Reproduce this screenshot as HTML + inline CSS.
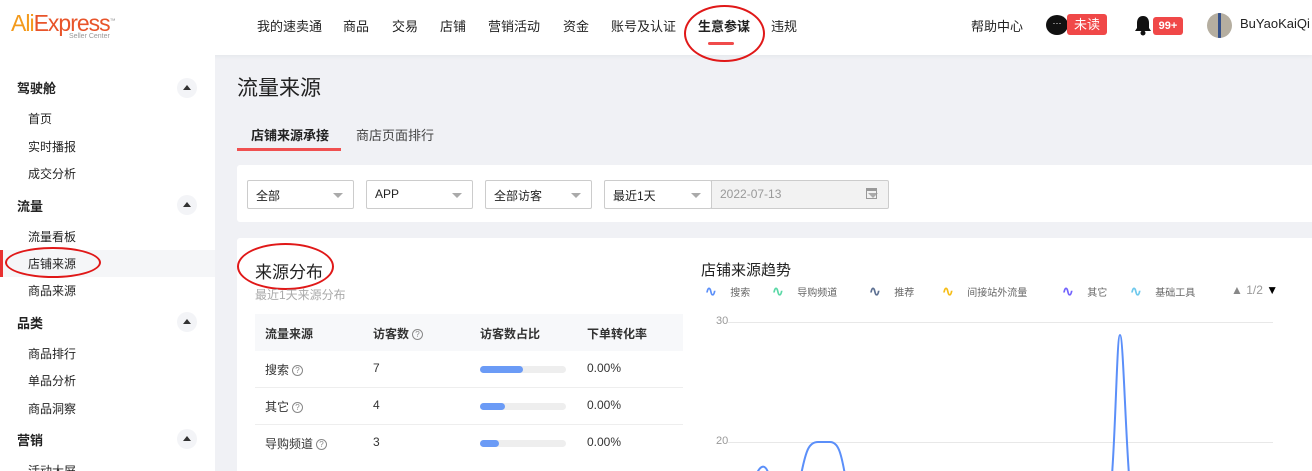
<!DOCTYPE html>
<html><head><meta charset="utf-8"><style>
*{margin:0;padding:0;box-sizing:border-box}
html,body{width:1312px;height:471px;overflow:hidden}
body{background:#f0f1f5;font-family:"Liberation Sans","Noto Sans CJK SC",sans-serif;color:#333;position:relative;font-size:13px}
.a{position:absolute;white-space:nowrap}
.hdr{position:absolute;left:0;top:0;width:1312px;height:55px;background:#fff;box-shadow:0 2px 4px rgba(0,0,0,.04)}
.nav{top:16px;font-size:13px;color:#222}
.side{position:absolute;left:0;top:55px;width:215px;height:416px;background:#fff}
.sg{font-size:13px;font-weight:bold;color:#222;left:17px}
.si{font-size:12px;color:#222;left:28px}
.car{position:absolute;left:177px;width:20px;height:20px;border-radius:50%;background:#f3f4f7}
.car:after{content:"";position:absolute;left:6px;top:7px;border:4px solid transparent;border-bottom:5px solid #333;border-top:0}
.card{position:absolute;background:#fff;border-radius:3px}
.sel{position:absolute;top:180px;height:29px;border:1px solid #ccc;border-radius:2px;font-size:12px;padding:6px 8px;color:#222;background:#fff}
.sel:after{content:"";position:absolute;right:10px;top:12px;border:5px solid transparent;border-top:5px solid #aaa}
.th{font-size:12px;font-weight:bold;color:#333;top:325px}
.td{font-size:12px;color:#333}
.q{display:inline-block;width:11px;height:11px;border:1px solid #888;border-radius:50%;font-size:8px;line-height:9px;text-align:center;color:#888;vertical-align:middle;margin-left:3px;font-weight:normal}
.bar{position:absolute;left:480px;width:86px;height:7px;border-radius:4px;background:#eee}
.bar i{display:block;height:7px;border-radius:4px;background:#6b9bf6}
.lg{font-size:10px;color:#666;top:283px}
.lg b{font-size:14px;font-weight:bold;margin-right:8px}
</style></head><body>
<div class="hdr"></div>
<div class="a" style="left:11px;top:10px;font-size:23px;letter-spacing:-1px;color:#e8542a"><span style="color:#f39a1c">Ali</span>Express<sup style="font-size:6px;color:#999">™</sup></div>
<div class="a" style="left:69px;top:33px;font-size:7px;color:#999">Seller Center</div>
<div class="a nav" style="left:257px">我的速卖通</div>
<div class="a nav" style="left:343px">商品</div>
<div class="a nav" style="left:392px">交易</div>
<div class="a nav" style="left:440px">店铺</div>
<div class="a nav" style="left:488px">营销活动</div>
<div class="a nav" style="left:563px">资金</div>
<div class="a nav" style="left:611px">账号及认证</div>
<div class="a nav" style="left:698px;font-weight:bold">生意参谋</div>
<div class="a" style="left:708px;top:42px;width:26px;height:3px;background:#f04b4b;border-radius:2px"></div>
<div class="a nav" style="left:771px">违规</div>
<div class="a" style="left:684px;top:5px;width:81px;height:57px;border:2px solid #e01818;border-radius:50%"></div>
<div class="a nav" style="left:971px">帮助中心</div>
<div class="a" style="left:1046px;top:15px;width:22px;height:20px;border-radius:50%;background:#111;color:#fff;font-size:9px;text-align:center;line-height:16px">···</div>
<div class="a" style="left:1067px;top:14px;width:40px;height:21px;background:#f04848;border-radius:3px;color:#fff;font-size:13px;text-align:center;line-height:21px">未读</div>
<svg class="a" style="left:1133px;top:14px" width="20" height="22" viewBox="0 0 20 22"><path d="M10 2c-4 0-6 3-6 7v5l-2 3h16l-2-3V9c0-4-2-7-6-7z" fill="#111"/><circle cx="10" cy="19" r="2.5" fill="#111"/></svg>
<div class="a" style="left:1153px;top:17px;width:30px;height:18px;background:#f04848;border-radius:3px;color:#fff;font-size:11px;font-weight:bold;text-align:center;line-height:18px">99+</div>
<div class="a" style="left:1207px;top:13px;width:25px;height:25px;border-radius:50%;background:#b5aea0;overflow:hidden"><div style="position:absolute;left:11px;top:0;width:3px;height:25px;background:#34508a"></div></div>
<div class="a nav" style="left:1240px">BuYaoKaiQi t</div>

<div class="side"></div>
<div class="a sg" style="top:78px">驾驶舱</div><div class="car" style="top:78px"></div>
<div class="a si" style="top:110px">首页</div>
<div class="a si" style="top:138px">实时播报</div>
<div class="a si" style="top:165px">成交分析</div>
<div class="a sg" style="top:196px">流量</div><div class="car" style="top:195px"></div>
<div class="a si" style="top:228px">流量看板</div>
<div class="a" style="left:0;top:250px;width:215px;height:27px;background:#f5f6f8"></div>
<div class="a" style="left:0;top:250px;width:3px;height:27px;background:#e83030"></div>
<div class="a si" style="top:255px">店铺来源</div>
<div class="a" style="left:5px;top:247px;width:96px;height:31px;border:2px solid #e01818;border-radius:50%"></div>
<div class="a si" style="top:282px">商品来源</div>
<div class="a sg" style="top:313px">品类</div><div class="car" style="top:312px"></div>
<div class="a si" style="top:345px">商品排行</div>
<div class="a si" style="top:372px">单品分析</div>
<div class="a si" style="top:400px">商品洞察</div>
<div class="a sg" style="top:430px">营销</div><div class="car" style="top:429px"></div>
<div class="a si" style="top:462px">活动大屏</div>

<div class="a" style="left:237px;top:72px;font-size:21px;color:#222">流量来源</div>
<div class="a" style="left:251px;top:125px;font-size:13px;font-weight:bold;color:#222">店铺来源承接</div>
<div class="a" style="left:356px;top:125px;font-size:13px;color:#444">商店页面排行</div>
<div class="a" style="left:237px;top:148px;width:104px;height:3px;background:#f05050"></div>

<div class="card" style="left:237px;top:165px;width:1080px;height:57px"></div>
<div class="sel" style="left:247px;width:107px">全部</div>
<div class="sel" style="left:366px;width:107px">APP</div>
<div class="sel" style="left:485px;width:107px">全部访客</div>
<div class="sel" style="left:604px;width:108px">最近1天</div>
<div class="sel" style="left:711px;width:178px;background:#f2f2f2;color:#999;border-radius:0 2px 2px 0">2022-07-13</div>
<div class="a" style="left:866px;top:188px;width:11px;height:11px;border:1.5px solid #999;border-top-width:3px"></div>

<div class="card" style="left:237px;top:238px;width:1080px;height:240px"></div>
<div class="a" style="left:255px;top:258px;font-size:17px;color:#222">来源分布</div>
<div class="a" style="left:237px;top:243px;width:97px;height:47px;border:2px solid #e01818;border-radius:50%"></div>
<div class="a" style="left:255px;top:286px;font-size:12px;color:#aaa">最近1天来源分布</div>
<div class="a" style="left:255px;top:314px;width:428px;height:37px;background:#f7f8fa"></div>
<div class="a th" style="left:265px">流量来源</div>
<div class="a th" style="left:373px">访客数<span class="q">?</span></div>
<div class="a th" style="left:480px">访客数占比</div>
<div class="a th" style="left:587px">下单转化率</div>
<div class="a" style="left:255px;top:387px;width:428px;height:1px;background:#eee"></div>
<div class="a" style="left:255px;top:424px;width:428px;height:1px;background:#eee"></div>
<div class="a td" style="left:265px;top:361px">搜索<span class="q">?</span></div><div class="a td" style="left:373px;top:361px">7</div><div class="bar" style="top:366px"><i style="width:43px"></i></div><div class="a td" style="left:587px;top:361px">0.00%</div>
<div class="a td" style="left:265px;top:398px">其它<span class="q">?</span></div><div class="a td" style="left:373px;top:398px">4</div><div class="bar" style="top:403px"><i style="width:25px"></i></div><div class="a td" style="left:587px;top:398px">0.00%</div>
<div class="a td" style="left:265px;top:435px">导购频道<span class="q">?</span></div><div class="a td" style="left:373px;top:435px">3</div><div class="bar" style="top:440px"><i style="width:19px"></i></div><div class="a td" style="left:587px;top:435px">0.00%</div>

<div class="a" style="left:701px;top:259px;font-size:15px;color:#222">店铺来源趋势</div>
<div class="a lg" style="left:705px"><b style="color:#5b8ff9">∿</b>&nbsp; 搜索</div>
<div class="a lg" style="left:772px"><b style="color:#5ad8a6">∿</b>&nbsp; 导购频道</div>
<div class="a lg" style="left:869px"><b style="color:#5d7092">∿</b>&nbsp; 推荐</div>
<div class="a lg" style="left:942px"><b style="color:#f6bd16">∿</b>&nbsp; 间接站外流量</div>
<div class="a lg" style="left:1062px"><b style="color:#7262fd">∿</b>&nbsp; 其它</div>
<div class="a lg" style="left:1130px"><b style="color:#6dc8ec">∿</b>&nbsp; 基础工具</div>
<div class="a" style="left:1231px;top:283px;font-size:12px;color:#888">▲ <span style="color:#999">1/2</span> <span style="color:#000">▼</span></div>
<div class="a" style="left:716px;top:315px;font-size:11px;color:#999">30</div>
<div class="a" style="left:716px;top:435px;font-size:11px;color:#999">20</div>
<div class="a" style="left:728px;top:322px;width:545px;height:1px;background:#e8e8e8"></div>
<div class="a" style="left:728px;top:442px;width:545px;height:1px;background:#e8e8e8"></div>
<svg class="a" style="left:0;top:0" width="1312" height="471"><path d="M756 475 C760 466 765 462 769 475 M801 475 C806 450 809 442 818 442 L830 442 C838 442 841 452 845 475 M1112 475 C1116 420 1117 335 1120 335 C1123 335 1125 420 1129 475" fill="none" stroke="#5b8ff9" stroke-width="2"/></svg>
</body></html>
